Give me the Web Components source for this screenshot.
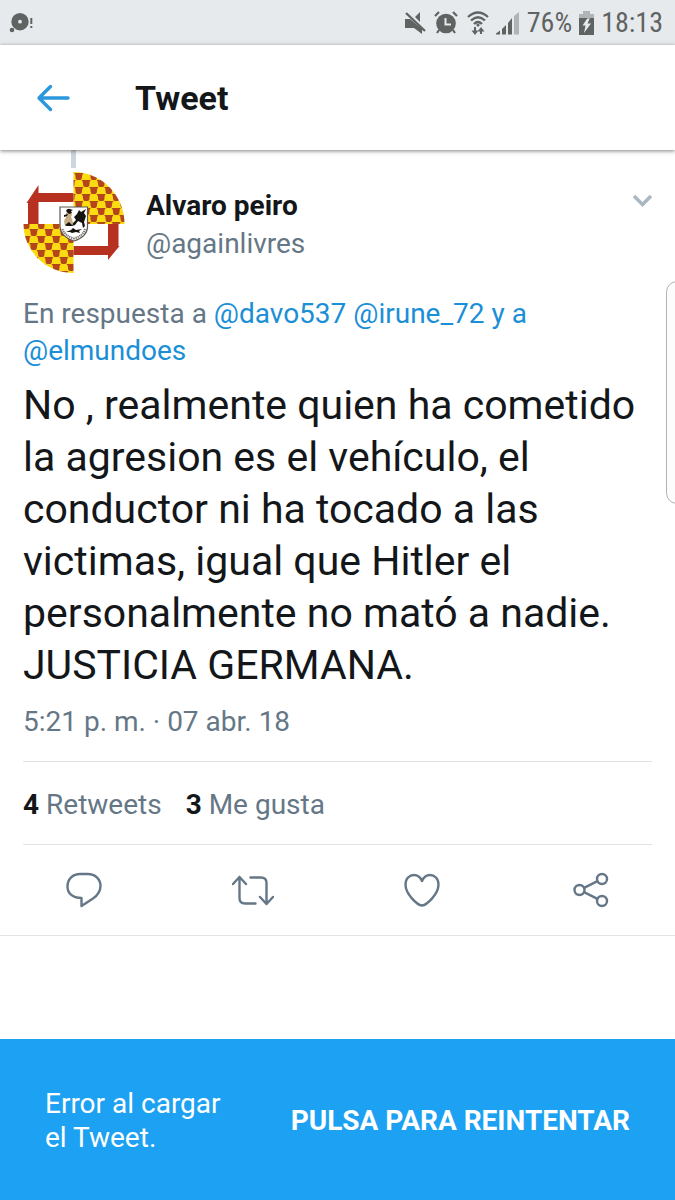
<!DOCTYPE html>
<html lang="es">
<head>
<meta charset="utf-8">
<meta name="viewport" content="width=device-width, initial-scale=1">
<title>Tweet</title>
<style>
  html, body {
    height: 100%;
    margin: 0;
  }

  body {
    font-family: Roboto, "Liberation Sans", sans-serif;
    color: #14171a;
    background: #fff;
  }
</style>
</head>
<body>
<tweet-screen>
  <status-bar slot="top" battery="76%" time="18:13"></status-bar>
  <app-bar slot="top">Tweet</app-bar>
  <tweet-detail>
    <user-avatar slot="avatar"></user-avatar>
    <span slot="name">Alvaro peiro</span>
    <span slot="handle">@againlivres</span>
    <reply-context slot="context">En respuesta a <a href="#respuestas">@davo537 @irune_72 y a</a> <a href="#elmundoes">@elmundoes</a></reply-context>
    <span slot="text">No , realmente quien ha cometido la agresion es el vehículo, el conductor ni ha tocado a las victimas, igual que Hitler el personalmente no mató a nadie. JUSTICIA GERMANA.</span>
    <span slot="date">5:21 p. m. · 07 abr. 18</span>
    <tweet-stat slot="stats" count="4">Retweets</tweet-stat>
    <tweet-stat slot="stats" count="3">Me gusta</tweet-stat>
    <tweet-actions slot="actions"></tweet-actions>
  </tweet-detail>
  <error-bar slot="bottom">
    Error al cargar el Tweet.
    <span slot="action">PULSA PARA REINTENTAR</span>
  </error-bar>
</tweet-screen>

<script>
class TweetScreen extends HTMLElement {
  constructor() {
    super();
    this.attachShadow({ mode: 'open' });
  }

  connectedCallback() {
    this.shadowRoot.innerHTML = `
      <style>
        :host {
          --ink: #14171a;
          --muted: #657786;
          --link: #1b8fd6;
          --line: #e1e4e7;
          --accent: #1da1f2;
          --gutter: 23px;
          display: flex;
          flex-direction: column;
          min-height: 100vh;
          position: relative;
          overflow: hidden;
        }

        main {
          flex: 1;
        }

        /* handle of the edge panel, floats over the tweet */
        .edge-handle {
          position: absolute;
          top: 281px;
          right: -13px;
          width: 20px;
          height: 221px;
          border: 1px solid #b4b4b4;
          border-radius: 12px;
          background: #fcfcfc;
        }
      </style>
      <slot name="top"></slot>
      <main><slot></slot></main>
      <slot name="bottom"></slot>
      <div class="edge-handle"></div>
    `;
  }
}

class StatusBar extends HTMLElement {
  constructor() {
    super();
    this.attachShadow({ mode: 'open' });
  }

  connectedCallback() {
    this.shadowRoot.innerHTML = `
      <style>
        :host {
          display: flex;
          align-items: center;
          justify-content: space-between;
          height: 45px;
          padding: 0 12px 0 9px;
          background: #e6eaed;
          color: #5f6362;
          font-family: "Roboto Condensed", Roboto, sans-serif;
          font-size: 28px;
          box-sizing: border-box;
        }

        .right {
          display: flex;
          align-items: center;
          gap: 7px;
        }

        svg {
          display: block;
          fill: currentColor;
        }
      </style>
      <svg width="26" height="24" viewBox="0 0 26 24">
        <path fill-rule="evenodd" d="M11 2a8.700 8.700 0 1 1 0 17.400a8.700 8.700 0 1 1 0-17.400zM11 8.800a1.900 1.900 0 1 0 0 3.800a1.900 1.900 0 1 0 0-3.800z"/>
        <circle cx="3" cy="19" r="2.300"/>
        <path d="M21.300 7h2v6h-2zM21.300 15h2v2h-2z"/>
      </svg>
      <div class="right">
        <svg width="22" height="24" viewBox="0 0 22 24">
          <path d="M0 8h5l12 10v5l-8-6H0zM10 6l5-5v10z"/>
          <path d="M1 2l19 18" stroke="currentColor" stroke-width="2.400"/>
        </svg>
        <svg width="24" height="24" viewBox="0 0 24 24">
          <circle cx="12" cy="12.500" r="9.800"/>
          <path d="M1 5l4-4M23 5l-4-4M5 19l-2 3M19 19l2 3" fill="none" stroke="currentColor" stroke-width="2.200"/>
          <path d="M11.500 7v6.500H17" fill="none" stroke="#e6eaed" stroke-width="2"/>
        </svg>
        <svg width="24" height="24" viewBox="0 0 24 24">
          <g fill="none" stroke="currentColor" stroke-width="2.300">
            <path d="M3 6Q13-3 23 6M6 9.500Q13 3 20 9.500M9 13q4-4 8 0"/>
            <path d="M10 16v5M16 23v-5" stroke-width="2"/>
          </g>
          <circle cx="13" cy="14" r="1.600"/>
          <path d="M6.500 19.500h7L10 24zM12.500 20.500h7L16 16z"/>
        </svg>
        <svg width="24" height="24" viewBox="0 0 24 24">
          <path d="M0 23.500v-1l4-3v4zM6 23.500V18l4-4v9.500zM12 23.500V12l4-5v16.500z"/>
          <path d="M18 23.500V5l5-4v22.500z" opacity=".4"/>
        </svg>
        <span>${this.getAttribute('battery')}</span>
        <svg width="15" height="24" viewBox="0 0 15 24">
          <path d="M0 8V3h4V0h7v3h4v5z" opacity=".4"/>
          <path fill-rule="evenodd" d="M0 7h15v17H0zM8.500 7L3.500 14.500h3L5 22l7-9.500H8.500L11 7z"/>
        </svg>
        <span>${this.getAttribute('time')}</span>
      </div>
    `;
  }
}

class AppBar extends HTMLElement {
  constructor() {
    super();
    this.attachShadow({ mode: 'open' });
  }

  connectedCallback() {
    this.shadowRoot.innerHTML = `
      <style>
        :host {
          display: flex;
          align-items: center;
          gap: 60px;
          height: 105px;
          padding: 0 32px;
          background: #fff;
          box-shadow: 0 1px 4px rgba(0, 0, 0, 0.5);
          box-sizing: border-box;
          z-index: 1;
        }

        button {
          display: block;
          padding: 0;
          border: 0;
          background: none;
          color: #2b98dd;
        }

        svg {
          display: block;
        }

        h1 {
          margin: 0;
          font-size: 34px;
          font-weight: 700;
          line-height: 40px;
        }
      </style>
      <button type="button" aria-label="Atrás">
        <svg width="43" height="36" viewBox="0 0 43 36" fill="none" stroke="currentColor" stroke-width="3.400" stroke-linecap="round" stroke-linejoin="round">
          <path d="M18.500 6.500L7 18L18.500 29.500M7 18H36"/>
        </svg>
      </button>
      <h1><slot></slot></h1>
    `;
  }
}

class UserAvatar extends HTMLElement {
  constructor() {
    super();
    this.attachShadow({ mode: 'open' });
  }

  connectedCallback() {
    this.shadowRoot.innerHTML = `
      <style>
        :host {
          display: block;
        }

        svg {
          display: block;
        }
      </style>
      <svg width="102" height="103" viewBox="0 0 102 103">
        <defs>
          <pattern id="waves" x="52" y="2" width="15" height="14" patternUnits="userSpaceOnUse">
            <rect width="15" height="14" fill="#fbdc12"/>
            <g fill="#b5451a">
              <path id="cup" d="M-1 0H8.500Q7 1 7 3.500Q7 7 5 7H2.500Q.5 7 .5 3.500Q.5 1-1 0z"/>
              <use href="#cup" x="15"/>
              <use href="#cup" x="7.500" y="7"/>
              <use href="#cup" x="-7.500" y="7"/>
            </g>
          </pattern>
        </defs>
        <g fill="#b63120">
          <path d="M50.500 22V31H15.500V53H5V32H3.500L15.500 14V22z"/>
          <path d="M50.500 84V75H85V53H95.500V75H96.500L85 89V84z"/>
        </g>
        <path fill="url(#waves)" d="M50.500 1A51 52 0 0 1 101.500 53H50.500z"/>
        <path fill="url(#waves)" d="M50.500 102A50 49 0 0 1 0.500 53H50.500z"/>
        <path d="M37 36H64.500V56Q64 66 51 70Q38 66 37 56z" fill="#fff" stroke="#5c5950" stroke-width="1.200"/>
        <path d="M43 42l2-2 3 1 1 3-1 2 1 2 1 4-2 3h-6l-1-5 2-4z" fill="#c9ad85"/>
        <path d="M43 40q1-3 4-2l3 1-2 1 1 2-3 1zM41 44l4-1-1 2-3 1zM42 54l4-3 4 4h-6z" fill="#15130f"/>
        <path d="M51 46l3-3 2-4 2 2 5-3-2 4 2 3-2 6 1 4-2 2-1-5-4-2-3 4-3 1 1-3 3-3z" fill="#15130f"/>
        <path d="M43 61l5-2 2-2 3 2 6-1-3 2 1 2-4-1-4 1-2-1z" fill="#15130f"/>
        <path d="M39.500 58Q42 65 51 67.500Q60 65 62 58" fill="none" stroke="#77736b" stroke-width="2" stroke-dasharray="1.300 .8"/>
      </svg>
    `;
  }
}

class ReplyContext extends HTMLElement {
  constructor() {
    super();
    this.attachShadow({ mode: 'open' });
  }

  connectedCallback() {
    this.shadowRoot.innerHTML = `
      <style>
        :host {
          display: block;
          color: var(--muted);
        }

        ::slotted(a) {
          color: var(--link);
          text-decoration: none;
        }
      </style>
      <slot></slot>
    `;
  }
}

class TweetStat extends HTMLElement {
  constructor() {
    super();
    this.attachShadow({ mode: 'open' });
  }

  connectedCallback() {
    this.shadowRoot.innerHTML = `
      <style>
        :host {
          display: block;
          color: var(--muted);
        }

        b {
          color: var(--ink);
        }
      </style>
      <b>${this.getAttribute('count')}</b> <slot></slot>
    `;
  }
}

class TweetActions extends HTMLElement {
  constructor() {
    super();
    this.attachShadow({ mode: 'open' });
  }

  connectedCallback() {
    this.shadowRoot.innerHTML = `
      <style>
        :host {
          display: grid;
          grid-template-columns: repeat(4, 1fr);
          color: var(--muted);
        }

        button {
          display: flex;
          align-items: center;
          justify-content: center;
          height: 90px;
          padding: 0;
          border: 0;
          background: none;
          color: inherit;
        }

        svg {
          fill: none;
          stroke: currentColor;
          stroke-width: 2.400;
          stroke-linecap: round;
          stroke-linejoin: round;
        }
      </style>
      <button type="button" aria-label="Responder">
        <svg width="42" height="36" viewBox="0 0 42 36">
          <path d="M18.500 26C9 26 4.500 21 4.500 14.500C4.500 7 10 2 17 2H25C32 2 37.500 7 37.500 14C37.500 19 35 23 30 26.500L18.500 34z"/>
        </svg>
      </button>
      <button type="button" aria-label="Retwittear">
        <svg width="42" height="36" viewBox="0 0 42 36">
          <path d="M1 12L7.500 5L14 12M7.500 5V26Q7.500 31.500 13 31.500H23.500M18.500 5.500H29Q34.500 5.500 34.500 11V32M28 25L34.500 32L41 25"/>
        </svg>
      </button>
      <button type="button" aria-label="Me gusta">
        <svg width="42" height="36" viewBox="0 0 42 36">
          <path d="M21 33.500C16 33 4.500 22 4.500 12.500C4.500 6.500 8.500 3 13 3C17 3 19.500 5.500 21 9C22.500 5.500 25 3 29 3C33.500 3 37.500 6.500 37.500 12.500C37.500 22 26 33 21 33.500z"/>
        </svg>
      </button>
      <button type="button" aria-label="Compartir">
        <svg width="42" height="36" viewBox="0 0 42 36">
          <circle cx="9.500" cy="18" r="5"/>
          <circle cx="32" cy="7" r="5"/>
          <circle cx="32" cy="29" r="5"/>
          <path d="M14 15.800L27.500 9.200M14 20.200L27.500 26.800"/>
        </svg>
      </button>
    `;
  }
}

class TweetDetail extends HTMLElement {
  constructor() {
    super();
    this.attachShadow({ mode: 'open' });
  }

  connectedCallback() {
    this.shadowRoot.innerHTML = `
      <style>
        :host {
          display: block;
          padding: 0 var(--gutter);
          border-bottom: 1px solid var(--line);
          font-size: 28px;
          line-height: 37px;
        }

        .thread {
          width: 5px;
          height: 18px;
          margin-left: 48px;
          background: #ccd6dd;
        }

        header {
          display: flex;
          align-items: flex-start;
          gap: 21px;
          padding-top: 3px;
        }

        .author {
          flex: 1;
          padding-top: 16px;
          line-height: 38px;
        }

        .name {
          font-weight: 700;
        }

        .handle, .date {
          color: var(--muted);
        }

        .more {
          padding: 0;
          margin-top: 16px;
          border: 0;
          background: none;
          color: #aab8c2;
        }

        .more svg {
          display: block;
        }

        .context {
          padding: 21px 100px 0 0;
        }

        .text {
          margin: 10px 0 12px;
          font-size: 41px;
          line-height: 52px;
        }

        .date {
          padding-bottom: 21px;
          border-bottom: 1px solid var(--line);
        }

        .stats {
          display: flex;
          gap: 24px;
          padding: 24px 0 21px;
          border-bottom: 1px solid var(--line);
        }

        .actions {
          margin: 0 calc(0px - var(--gutter));
        }
      </style>
      <div class="thread"></div>
      <header>
        <slot name="avatar"></slot>
        <div class="author">
          <div class="name"><slot name="name"></slot></div>
          <div class="handle"><slot name="handle"></slot></div>
        </div>
        <button class="more" type="button" aria-label="Más opciones">
          <svg width="20" height="28" viewBox="0 0 20 28" fill="none" stroke="currentColor" stroke-width="3.500">
            <path d="M2 9L10.500 17.500L19 9"/>
          </svg>
        </button>
      </header>
      <div class="context"><slot name="context"></slot></div>
      <p class="text"><slot name="text"></slot></p>
      <div class="date"><slot name="date"></slot></div>
      <div class="stats"><slot name="stats"></slot></div>
      <div class="actions"><slot name="actions"></slot></div>
    `;
  }
}

class ErrorBar extends HTMLElement {
  constructor() {
    super();
    this.attachShadow({ mode: 'open' });
  }

  connectedCallback() {
    this.shadowRoot.innerHTML = `
      <style>
        :host {
          display: flex;
          align-items: center;
          gap: 45px;
          padding: 48px 45px 45px;
          background: var(--accent);
          color: #fff;
          font-size: 28px;
          line-height: 34px;
        }

        .message {
          flex: 1;
          margin: 0;
        }

        button {
          padding: 0;
          border: 0;
          background: none;
          color: inherit;
          font: inherit;
          font-weight: 700;
          white-space: nowrap;
        }
      </style>
      <p class="message"><slot></slot></p>
      <button type="button"><slot name="action"></slot></button>
    `;
  }
}

customElements.define('tweet-screen', TweetScreen);
customElements.define('status-bar', StatusBar);
customElements.define('app-bar', AppBar);
customElements.define('user-avatar', UserAvatar);
customElements.define('reply-context', ReplyContext);
customElements.define('tweet-stat', TweetStat);
customElements.define('tweet-actions', TweetActions);
customElements.define('tweet-detail', TweetDetail);
customElements.define('error-bar', ErrorBar);
</script>
</body>
</html>
